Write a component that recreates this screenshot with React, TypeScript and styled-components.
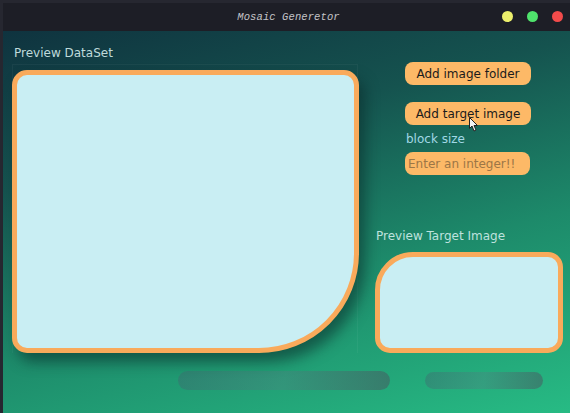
import React from "react";
import styled, { createGlobalStyle } from "styled-components";

const Global = createGlobalStyle`
  html, body { margin: 0; padding: 0; background: #1c1d24; }
  * { box-sizing: border-box; }
`;

const Screen = styled.div`
  position: relative;
  width: 570px;
  height: 413px;
  overflow: hidden;
  background: #262730;
  padding: 3px 0 0 3px;
  display: flex;
  flex-direction: column;
  font-family: "DejaVu Sans", "Noto Sans", sans-serif;
`;

const TitleBar = styled.div`
  position: relative;
  height: 28px;
  flex: none;
  background: #1d1e26;
  display: flex;
  align-items: center;
  justify-content: center;
`;

const Title = styled.span`
  font-family: "Liberation Mono", "DejaVu Sans Mono", monospace;
  font-style: italic;
  font-size: 10.5px;
  color: #c4c4c8;
  letter-spacing: 0.1px;
  margin-left: 4px;
`;

const Lights = styled.div`
  position: absolute;
  right: 7px;
  top: 8px;
  display: flex;
  gap: 14px;
`;

const Light = styled.span<{ $c: string }>`
  width: 11px;
  height: 11px;
  border-radius: 50%;
  background: ${(p) => p.$c};
`;

const Main = styled.div`
  flex: 1;
  background: linear-gradient(165deg, #0f333f 0%, #15534f 30%, #1d8a6a 62%, #27bb84 100%);
  display: grid;
  grid-template-columns: 346px 188px;
  grid-template-rows: auto auto;
  align-content: start;
  column-gap: 17px;
  padding: 14px 0 0 9px;
`;

const LeftCol = styled.div`
  display: flex;
  flex-direction: column;
`;

const Label = styled.div<{ $color?: string }>`
  font-size: 12px;
  line-height: 16px;
  color: ${(p) => p.$color || "#bfdadb"};
  padding-left: 2px;
`;

const Frame = styled.div`
  margin-top: 3px;
  border: 1px solid rgba(255, 255, 255, 0.045);
  border-bottom: none;
  padding-top: 5px;
`;

const PreviewBox = styled.div<{ $w: string; $h: number; $r: string }>`
  width: ${(p) => p.$w};
  height: ${(p) => p.$h}px;
  background: #c9eef3;
  border: 5px solid #f9aa5b;
  border-radius: ${(p) => p.$r};
`;

const DataBox = styled(PreviewBox)`
  margin-left: -1px;
  box-shadow: 6px 9px 14px rgba(10, 40, 40, 0.55);
`;

const RightCol = styled.div`
  display: flex;
  flex-direction: column;
`;

const Controls = styled.div`
  padding-left: 30px;
  padding-top: 17px;
  display: flex;
  flex-direction: column;
  align-items: flex-start;
`;

const Button = styled.div<{ $mt?: number }>`
  width: 126px;
  height: 23px;
  margin-top: ${(p) => p.$mt || 0}px;
  background: #fdb967;
  border-radius: 8px;
  color: #1b1b1b;
  font-size: 12px;
  display: flex;
  align-items: center;
  justify-content: center;
`;

const SizeLabel = styled.div`
  margin-top: 6px;
  font-size: 12px;
  line-height: 16px;
  color: #a2d8e6;
  padding-left: 1px;
`;

const Input = styled.div`
  margin-top: 5px;
  width: 125px;
  height: 23px;
  background: #fdb967;
  border-radius: 8px;
  color: #9c7646;
  font-size: 12px;
  display: flex;
  align-items: center;
  padding-left: 3px;
`;

const TargetLabel = styled(Label)`
  margin-top: 53px;
  padding-left: 1px;
`;

const TargetBox = styled(PreviewBox)`
  margin-top: 8px;
`;

const BottomRow = styled.div`
  grid-column: 1 / span 2;
  display: flex;
  align-items: flex-start;
  padding-left: 166px;
  margin-top: 18px;
`;

const Bar = styled.div<{ $w: number; $h: number; $ml?: number; $mt?: number }>`
  width: ${(p) => p.$w}px;
  height: ${(p) => p.$h}px;
  margin-left: ${(p) => p.$ml || 0}px;
  margin-top: ${(p) => p.$mt || 0}px;
  border-radius: ${(p) => p.$h / 2}px;
  background: linear-gradient(100deg, rgba(70, 90, 110, 0.35), rgba(90, 120, 130, 0.3) 50%, rgba(80, 70, 90, 0.45));
`;

const Cursor = styled.svg`
  position: absolute;
  left: 469px;
  top: 117px;
`;

export default function App() {
  return (
    <>
      <Global />
      <Screen>
        <TitleBar>
          <Title>Mosaic Generetor</Title>
          <Lights>
            <Light $c="#ecef6c" />
            <Light $c="#4fe36c" />
            <Light $c="#f24b4b" />
          </Lights>
        </TitleBar>
        <Main>
          <LeftCol>
            <Label>Preview DataSet</Label>
            <Frame>
              <DataBox $w="347px" $h={283} $r="15px 15px 100px 15px" />
            </Frame>
          </LeftCol>
          <RightCol>
            <Controls>
              <Button $mt={0}>Add image folder</Button>
              <Button $mt={17}>Add target image</Button>
              <SizeLabel>block size</SizeLabel>
              <Input>Enter an integer!!</Input>
            </Controls>
            <TargetLabel $color="#bfe2de">Preview Target Image</TargetLabel>
            <TargetBox $w="188px" $h={101} $r="38px 15px 15px 15px" />
          </RightCol>
          <BottomRow>
            <Bar $w={212} $h={19} />
            <Bar $w={118} $h={17} $ml={35} $mt={1} />
          </BottomRow>
        </Main>
        <Cursor width="10" height="15" viewBox="0 0 10 15">
          <path d="M0.5 0.5 L0.5 11.5 L3 9 L5 14 L7 13 L5 8.5 L8.5 8.5 Z" fill="#f4f4f4" stroke="#222" strokeWidth="1" />
        </Cursor>
      </Screen>
    </>
  );
}
